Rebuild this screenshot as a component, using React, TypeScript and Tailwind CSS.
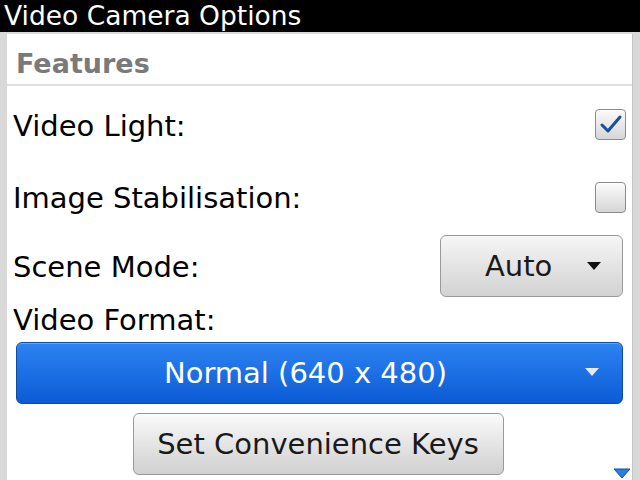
import React from 'react';

const font = { fontFamily: '"DejaVu Sans", Verdana, sans-serif' };

function Checkbox({ checked }: { checked?: boolean }) {
  return (
    <div className="w-[31px] h-[31px] rounded-[4px] border border-[#8c8c8c] bg-gradient-to-b from-[#fbfbfb] to-[#d6d6d6] flex items-center justify-center shadow-[inset_0_1px_0_#fff]">
      {checked && (
        <svg width="24" height="20" viewBox="0 0 24 20">
          <path d="M3 11 L9 17 L21 3" fill="none" stroke="#1a4f9c" strokeWidth="3" strokeLinecap="round" strokeLinejoin="round" />
        </svg>
      )}
    </div>
  );
}

function Caret({ color }: { color: string }) {
  return (
    <svg width="16" height="10" viewBox="0 0 16 10">
      <path d="M1 1 H15 L8 9 Z" fill={color} />
    </svg>
  );
}

export default function App() {
  return (
    <div className="relative w-[640px] h-[480px] bg-black flex flex-col overflow-hidden" style={font}>
      {/* Title bar */}
      <div className="h-[32px] px-[4px] text-white text-[26.5px] leading-[32px] whitespace-nowrap">
        Video Camera Options
      </div>

      {/* Screen body */}
      <div className="flex-1 bg-[#d9d9d9] pt-[2px] pl-[7px] pr-[7px] flex">
        <div className="flex-1 bg-white flex flex-col border-r border-[#c4c4c4]">
          {/* Section header */}
          <div className="h-[52px] border-b-2 border-[#dedede] px-[9px] pt-[8px] flex items-center">
            <span className="text-[27px] leading-none font-bold text-[#7a7a7a]">Features</span>
          </div>

          {/* Video Light */}
          <div className="h-[76px] pl-[6px] pr-[6px] flex items-center justify-between">
            <span className="text-[29px] leading-none text-black pt-[4px]">Video Light:</span>
            <Checkbox checked />
          </div>

          {/* Image Stabilisation */}
          <div className="h-[70px] pl-[6px] pr-[6px] flex items-center justify-between">
            <span className="text-[29px] leading-none text-black pt-[2px]">Image Stabilisation:</span>
            <Checkbox />
          </div>

          {/* Scene Mode */}
          <div className="h-[68px] pl-[6px] pr-[9px] flex items-center justify-between">
            <span className="text-[29px] leading-none text-black pt-[2px]">Scene Mode:</span>
            <div className="w-[183px] h-[62px] rounded-[6px] border border-[#9a9a9a] bg-gradient-to-b from-[#f6f6f6] to-[#d2d2d2] flex items-center pl-[44px] pr-[20px] justify-between">
              <span className="text-[29px] leading-none text-[#1a1a1a]">Auto</span>
              <Caret color="#111" />
            </div>
          </div>

          {/* Video Format */}
          <div className="h-[40px] pl-[6px] flex items-center">
            <span className="text-[29px] leading-none text-black">Video Format:</span>
          </div>
          <div className="pl-[9px] pr-[9px] pt-[2px]">
            <div className="relative h-[62px] rounded-[6px] border border-[#0d4aa6] bg-gradient-to-b from-[#2d83f2] to-[#0b5bd6] flex items-center justify-center pr-[28px] shadow-[inset_0_1px_0_#6aa8f7]">
              <span className="text-[29px] leading-none text-white">Normal (640 x 480)</span>
              <div className="absolute right-[22px] top-[24px]">
                <Caret color="#e6e9ef" />
              </div>
            </div>
          </div>

          {/* Convenience keys button */}
          <div className="flex justify-center pt-[9px] pr-[3px]">
            <div className="w-[371px] h-[62px] rounded-[6px] border border-[#9a9a9a] bg-gradient-to-b from-[#fafafa] to-[#d0d0d0] flex items-center justify-center">
              <span className="text-[29px] leading-none text-[#1a1a1a]">Set Convenience Keys</span>
            </div>
          </div>
        </div>
      </div>

      {/* Scroll-down indicator */}
      <svg className="absolute left-[613px] top-[468px]" width="18" height="11" viewBox="0 0 18 11">
        <path d="M1 1 H17 L9 10 Z" fill="#2a7fe0" stroke="#0e4f9e" strokeWidth="1" />
      </svg>
    </div>
  );
}
